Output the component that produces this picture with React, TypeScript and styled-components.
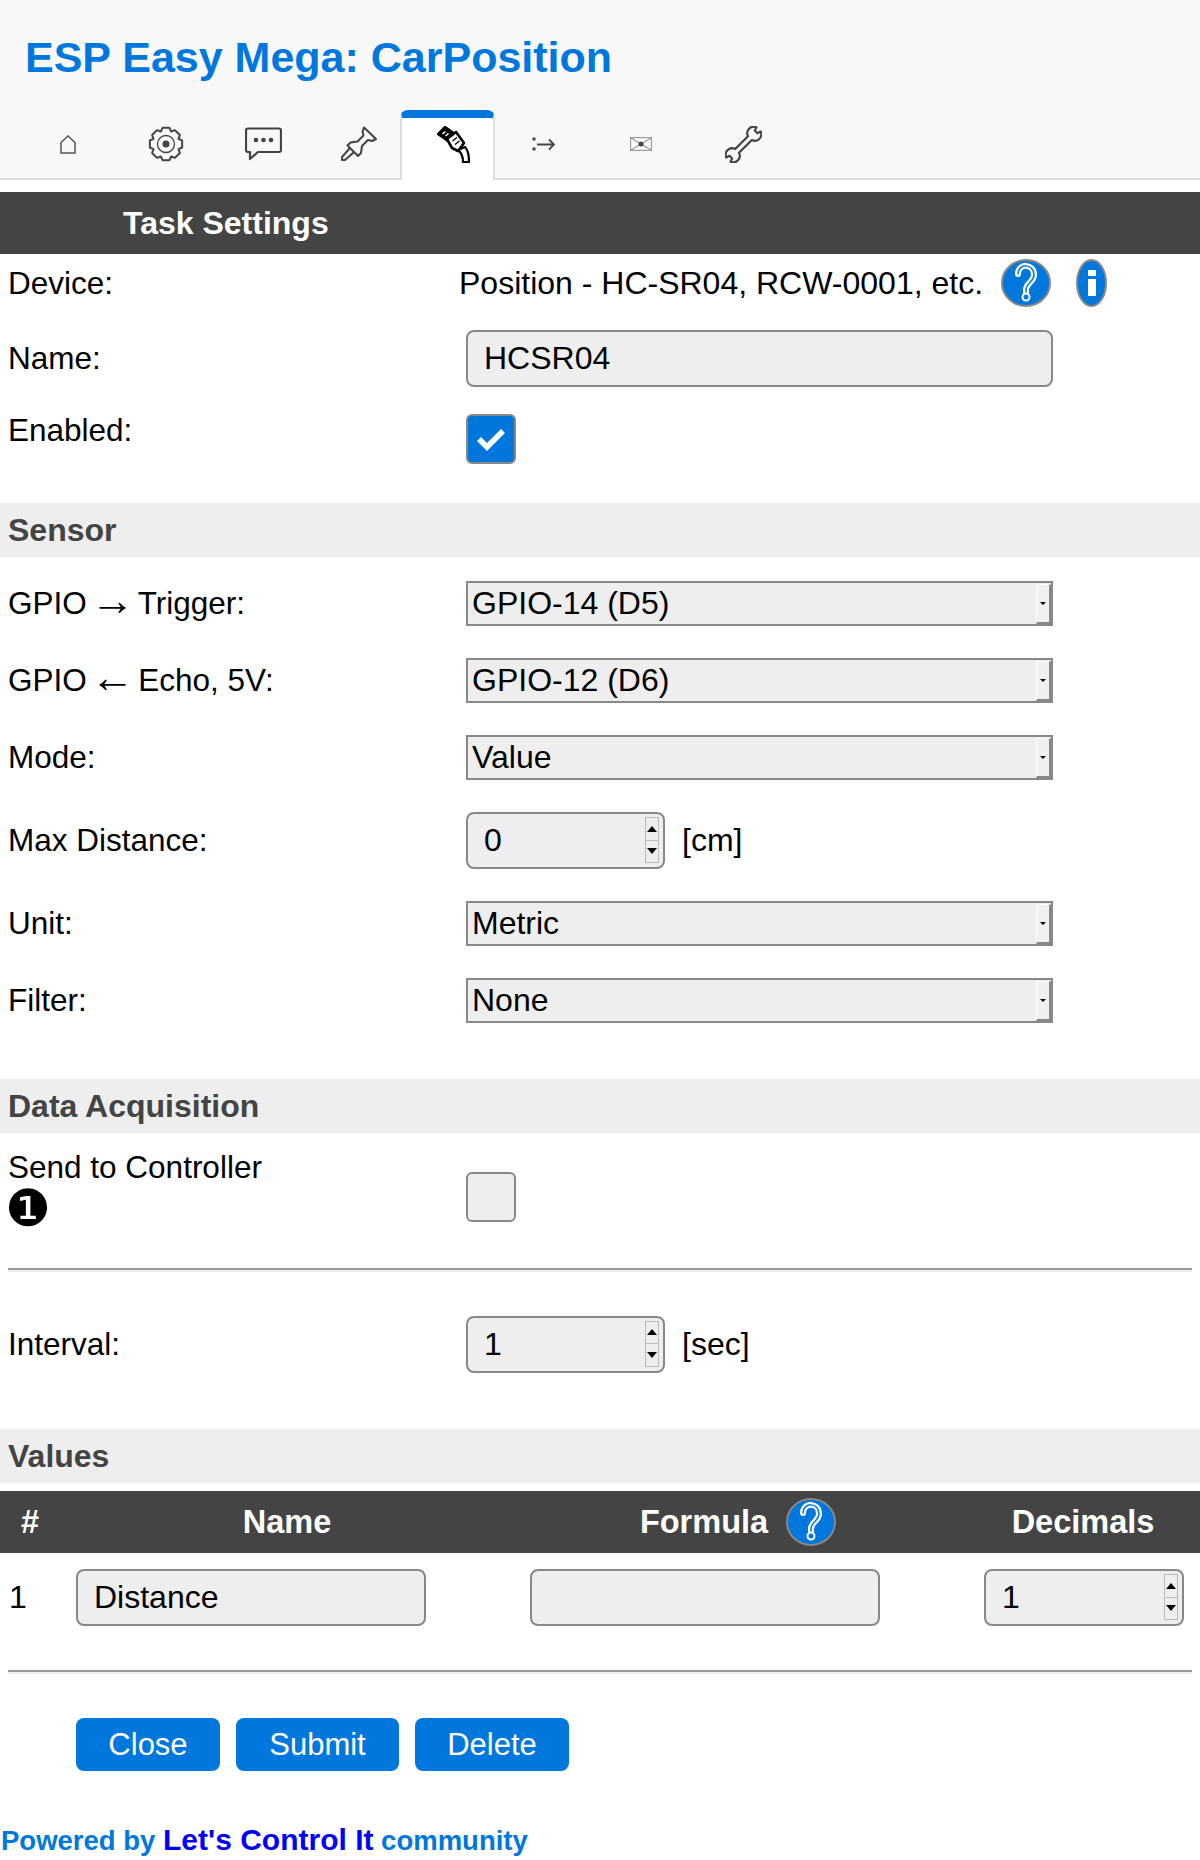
import React from "react";
import styled, { createGlobalStyle } from "styled-components";

const Global = createGlobalStyle`
  html, body { margin: 0; padding: 0; background: #fff; }
  body { width: 1200px; height: 1860px; overflow: hidden; font-family: "Liberation Sans", Arial, sans-serif; font-size: 32px; color: #000; }
  * { box-sizing: border-box; }
`;

const Head = styled.header`
  height: 180px;
  background: #f8f8f8;
  border-bottom: 2px solid #ddd;
  display: flex;
  flex-direction: column;
`;
const Title = styled.h1`
  margin: 0;
  flex: none;
  height: 110px;
  padding: 33px 0 0 25px;
  font-size: 43px;
  line-height: 48px;
  font-weight: 700;
  color: #07d;
`;
const Tabs = styled.nav`
  display: flex;
  flex: none;
  padding-left: 19px;
  height: 70px;
`;
const Tab = styled.a<{ $w: number; $active?: boolean }>`
  width: ${(p) => p.$w}px;
  flex: none;
  height: 70px;
  display: flex;
  align-items: center;
  justify-content: center;
  padding-bottom: 2px;
  ${(p) =>
    p.$active
      ? `background:#fff;border-top:8px solid #07d;border-left:2px solid #ddd;border-right:2px solid #ddd;border-radius:8px 8px 0 0;padding:0 0 10px 12px;`
      : ""}
`;
const TabsGap = styled.div`
  width: 8px;
  flex: none;
`;
const Bar = styled.div`
  margin-top: 12px;
  height: 62px;
  background: #444;
  color: #fff;
  font-weight: 700;
  font-size: 32px;
  line-height: 62px;
  padding-left: 123px;
`;
const Row = styled.div<{ $h: number }>`
  display: grid;
  grid-template-columns: 466px 1fr;
  align-items: center;
  height: ${(p) => p.$h}px;
`;
const Label = styled.div<{ $lift?: number }>`
  padding-left: 8px;
  font-size: 31.500px;
  line-height: 40px;
  margin-bottom: ${(p) => (p.$lift ?? 0) * 2}px;
`;
const ArrowChar = styled.span`
  font-size: 44px;
  line-height: 0;
  vertical-align: -1px;
  margin: 0 -5px;
`;
const Value = styled.div`
  display: flex;
  align-items: center;
`;
const DeviceText = styled.span`
  margin-left: -7px;
  white-space: nowrap;
`;
const HelpBtn = styled.a<{ $w: number; $ml: number }>`
  flex: none;
  width: ${(p) => p.$w}px;
  height: 48px;
  margin-left: ${(p) => p.$ml}px;
  display: block;
  line-height: 0;
`;
const Spacer = styled.div<{ $h: number }>`
  height: ${(p) => p.$h}px;
`;
const Section = styled.div`
  height: 54px;
  background: #eee;
  color: #444;
  font-weight: 700;
  font-size: 32px;
  line-height: 54px;
  padding-left: 8px;
`;
const TextInput = styled.input<{ $w: number }>`
  width: ${(p) => p.$w}px;
  height: 57px;
  background: #eee;
  border: 2px solid #888;
  border-radius: 8px;
  padding: 0 16px;
  font: 32px "Liberation Sans", Arial, sans-serif;
  color: #000;
  outline: none;
`;
const NumberBox = styled.div<{ $w: number }>`
  position: relative;
  width: ${(p) => p.$w}px;
  height: 57px;
  flex: none;
`;
const NumberInput = styled(TextInput)`
  width: 100%;
`;
const Spin = styled.div`
  position: absolute;
  right: 6px;
  top: 5px;
  bottom: 6px;
  width: 14px;
  border: 1px solid #bbb;
  display: flex;
  flex-direction: column;
  background: #eee;
`;
const SpinPart = styled.div<{ $down?: boolean }>`
  flex: 1;
  display: flex;
  align-items: center;
  justify-content: center;
  ${(p) => (p.$down ? "border-top:1px solid #bbb;" : "")}
  &::after {
    content: "";
    border-left: 5px solid transparent;
    border-right: 5px solid transparent;
    ${(p) => (p.$down ? "border-top:6px solid #000;" : "border-bottom:6px solid #000;")}
  }
`;
const Unit = styled.span`
  margin-left: 17px;
`;
const SelectBox = styled.div`
  position: relative;
  width: 587px;
  height: 45px;
`;
const Select = styled.select`
  appearance: none;
  display: block;
  width: 100%;
  height: 100%;
  background: #eee;
  border: 2px solid #888;
  border-radius: 0;
  padding: 0 0 2px 4px;
  font: 32px "Liberation Sans", Arial, sans-serif;
  color: #000;
  outline: none;
`;
const SelectArrow = styled.div`
  position: absolute;
  right: 2px;
  top: 3px;
  bottom: 2px;
  width: 15px;
  background: #f0f0f0;
  border-left: 1px solid #fff;
  border-top: 1px solid #fff;
  border-right: 2px solid #888;
  border-bottom: 2px solid #888;
  display: flex;
  align-items: center;
  justify-content: center;
  &::after {
    content: "";
    border-left: 3px solid transparent;
    border-right: 3px solid transparent;
    border-top: 3px solid #000;
  }
`;
const Check = styled.div<{ $on?: boolean }>`
  width: 50px;
  height: 50px;
  border-radius: 6px;
  border: 2px solid #888;
  background: ${(p) => (p.$on ? "#07d" : "#eee")};
  display: flex;
  align-items: center;
  justify-content: center;
`;
const Badge = styled.span`
  display: block;
  font-family: "DejaVu Serif", "DejaVu Sans", sans-serif;
  font-size: 51px;
  line-height: 40px;
  margin: 2px 0 -2px -3px;
`;
const Rule = styled.hr<{ $mt: number }>`
  margin: ${(p) => p.$mt}px 8px 0;
  height: 4px;
  border: 0;
  border-top: 2px solid #999;
  border-bottom: 2px solid #eee;
`;
const TableHead = styled.div`
  margin-top: 8px;
  height: 62px;
  background: #444;
  color: #fff;
  font-weight: 700;
  font-size: 32.500px;
  display: grid;
  grid-template-columns: 60px 454px 470px 216px;
  align-items: center;
  text-align: center;
`;
const HeadCell = styled.div<{ $pr?: number }>`
  display: flex;
  align-items: center;
  justify-content: center;
  padding-right: ${(p) => p.$pr ?? 0}px;
`;
const TableRow = styled.div`
  height: 89px;
  display: grid;
  grid-template-columns: 76px 454px 454px 216px;
  align-items: center;
`;
const RowNum = styled.div`
  padding-left: 9px;
`;
const Buttons = styled.div`
  margin-top: 44px;
  padding-left: 76px;
  display: flex;
  gap: 16px;
`;
const Btn = styled.a<{ $w: number }>`
  width: ${(p) => p.$w}px;
  height: 53px;
  background: #07d;
  color: #fff;
  border-radius: 8px;
  display: flex;
  align-items: center;
  justify-content: center;
  font-size: 31px;
`;
const Footer = styled.footer`
  margin-top: 49px;
  padding-left: 1px;
  font-size: 27.500px;
  line-height: 40px;
  font-weight: 700;
  color: #07d;
  white-space: nowrap;
`;
const FooterLink = styled.a`
  font-size: 30px;
  color: #00f;
`;

const gearPath = (() => {
  const pts: string[] = [];
  const n = 8;
  for (let i = 0; i < n; i++) {
    const a = (i / n) * Math.PI * 2;
    const step = (Math.PI * 2) / n;
    [
      [13.5, -0.5],
      [16.5, -0.27],
      [16.5, 0.27],
      [13.5, 0.5],
    ].forEach(([r, t]) => {
      const ang = a + t * step;
      pts.push(`${(18 + r * Math.cos(ang)).toFixed(2)} ${(18 + r * Math.sin(ang)).toFixed(2)}`);
    });
  }
  return "M" + pts.join("L") + "Z";
})();

const HomeIcon = () => (
  <svg width="16" height="19" viewBox="0 0 16 19" fill="none" stroke="#555" strokeWidth="1.500">
    <path d="M1 18V7.500L8 1l7 6.500V18Z" />
  </svg>
);
const GearIcon = () => (
  <svg width="36" height="36" viewBox="0 0 36 36" fill="none" stroke="#444" strokeWidth="2" strokeLinejoin="round">
    <path d={gearPath} />
    <circle cx="18" cy="18" r="8.500" strokeWidth="1.300" />
    <circle cx="18" cy="18" r="3.500" fill="#444" stroke="none" />
  </svg>
);
const ChatIcon = () => (
  <svg width="37" height="34" viewBox="0 0 37 34" fill="none" stroke="#444" strokeWidth="2.200" strokeLinejoin="round">
    <path d="M3 1.500H34a2 2 0 0 1 2 2V23a2 2 0 0 1-2 2H13l-8 7V25H3a2 2 0 0 1-2-2V3.500a2 2 0 0 1 2-2Z" />
    <circle cx="11" cy="13" r="2.300" fill="#444" stroke="none" />
    <circle cx="18.500" cy="13" r="2.300" fill="#444" stroke="none" />
    <circle cx="26" cy="13" r="2.300" fill="#444" stroke="none" />
  </svg>
);
const PinIcon = () => (
  <svg width="36" height="36" viewBox="0 0 36 36" fill="none" stroke="#444" strokeWidth="2" strokeLinejoin="round">
    <path d="M23 1.500 35 13l-4 2-4-1-6 6-1 7-3 3L6.500 19.500l3-3 7-1 6-6-1-4Z" />
    <path d="M9 22 1 31v3h3l9-8" />
  </svg>
);
const PlugIcon = () => (
  <svg width="33" height="37" viewBox="0 0 33 37" strokeLinejoin="round">
    <path d="M1 8 8 1l10 7-7 7Z" fill="#000" stroke="#000" strokeWidth="2.400" />
    <path d="M5.500 8 8.500 5.500M8.500 10 11.500 7.500" stroke="#fff" strokeWidth="1.600" fill="none" />
    <path d="M21 24C25 27 26 31 26 36h6C32 29 31 24 28 21Z" fill="#fff" stroke="#000" strokeWidth="2.200" />
    <path d="M10 13 19 6 27 17 21 25 15 22Z" fill="#fff" stroke="#000" strokeWidth="2.600" />
    <path d="M15.500 15l4.500-3.500M18 18.500l4.500-3.500" stroke="#000" strokeWidth="1.300" fill="none" />
  </svg>
);
const ArrowIcon = () => (
  <svg width="23" height="14" viewBox="0 0 23 14" fill="none" stroke="#444" strokeWidth="1.800">
    <circle cx="2" cy="2" r="1.700" fill="#444" stroke="none" />
    <circle cx="2" cy="12" r="1.700" fill="#444" stroke="none" />
    <path d="M5 7.500H21.500M17 2.500l5 5-5 5" />
  </svg>
);
const MailIcon = () => (
  <svg width="22" height="14" viewBox="0 0 22 14" fill="none" stroke="#999" strokeWidth="1.200">
    <rect x="0.600" y="0.600" width="20.800" height="12.800" fill="#fff" />
    <path d="M1 1l10 6 10-6M1 13l10-6 10 6" />
    <circle cx="11" cy="7" r="2.500" fill="#444" stroke="none" />
  </svg>
);
const WrenchIcon = () => (
  <svg width="37" height="37" viewBox="0 0 37 37" fill="none" stroke="#444" strokeWidth="2.200" strokeLinejoin="round">
    <path d="M23 10.200A6.500 6.500 0 0 1 31.500 1.300L29.800 4.500 32.500 7.200 35.700 5.500A6.500 6.500 0 0 1 26.800 14L14 26.800A6.500 6.500 0 0 1 5.500 35.700L7.200 32.500 4.500 29.800 1.300 31.500A6.500 6.500 0 0 1 10.200 23Z" />
  </svg>
);
const Tick = () => (
  <svg width="30" height="24" viewBox="0 0 30 24" fill="none" stroke="#fff" strokeWidth="5.500">
    <path d="M3 12l8 8L27 4" />
  </svg>
);
const HelpIcon = () => (
  <svg width="50" height="48" viewBox="0 0 50 48">
    <ellipse cx="25" cy="24" rx="24" ry="23" fill="#07d" stroke="#888" strokeWidth="2" />
    <g fill="none" strokeLinecap="round" strokeLinejoin="round">
      <path d="M17 15C17 4 33 4 33 16C33 23 26 23 25 30V35" stroke="#fff" strokeWidth="6" />
      <path d="M17 15C17 4 33 4 33 16C33 23 26 23 25 30V35" stroke="#07d" strokeWidth="1.500" />
    </g>
    <circle cx="25" cy="38" r="3.500" fill="#07d" stroke="#fff" strokeWidth="2" />
  </svg>
);
const InfoIcon = () => (
  <svg width="31" height="48" viewBox="0 0 31 48">
    <ellipse cx="15.500" cy="24" rx="14.500" ry="23" fill="#07d" stroke="#888" strokeWidth="2" />
    <rect x="12" y="11" width="8" height="6" fill="#fff" />
    <rect x="12" y="20" width="8" height="17" fill="#fff" />
  </svg>
);

const Dropdown = ({ value }: { value: string }) => (
  <SelectBox>
    <Select defaultValue={value}>
      <option>{value}</option>
    </Select>
    <SelectArrow />
  </SelectBox>
);
const Num = ({ w, value }: { w: number; value: string }) => (
  <NumberBox $w={w}>
    <NumberInput $w={w} defaultValue={value} />
    <Spin>
      <SpinPart />
      <SpinPart $down />
    </Spin>
  </NumberBox>
);

export default function App() {
  return (
    <>
      <Global />
      <Head>
        <Title>ESP Easy Mega: CarPosition</Title>
        <Tabs>
          <Tab $w={97}><HomeIcon /></Tab>
          <Tab $w={100}><GearIcon /></Tab>
          <Tab $w={94}><ChatIcon /></Tab>
          <TabsGap />
          <Tab $w={82}><PinIcon /></Tab>
          <Tab $w={95} $active><PlugIcon /></Tab>
          <Tab $w={97}><ArrowIcon /></Tab>
          <Tab $w={98}><MailIcon /></Tab>
          <Tab $w={106}><WrenchIcon /></Tab>
        </Tabs>
      </Head>
      <Bar>Task Settings</Bar>
      <Row $h={58}>
        <Label>Device:</Label>
        <Value>
          <DeviceText>Position - HC-SR04, RCW-0001, etc.</DeviceText>
          <HelpBtn $w={50} $ml={18}><HelpIcon /></HelpBtn>
          <HelpBtn $w={31} $ml={25}><InfoIcon /></HelpBtn>
        </Value>
      </Row>
      <Row $h={92}>
        <Label>Name:</Label>
        <Value><TextInput $w={587} defaultValue="HCSR04" /></Value>
      </Row>
      <Row $h={70}>
        <Label $lift={9}>Enabled:</Label>
        <Value><Check $on><Tick /></Check></Value>
      </Row>
      <Spacer $h={29} />
      <Section>Sensor</Section>
      <Spacer $h={8} />
      <Row $h={77}>
        <Label $lift={1}>GPIO <ArrowChar>→</ArrowChar> Trigger:</Label>
        <Value><Dropdown value="GPIO-14 (D5)" /></Value>
      </Row>
      <Row $h={77}>
        <Label $lift={1}>GPIO <ArrowChar>←</ArrowChar> Echo, 5V:</Label>
        <Value><Dropdown value="GPIO-12 (D6)" /></Value>
      </Row>
      <Row $h={77}>
        <Label $lift={1}>Mode:</Label>
        <Value><Dropdown value="Value" /></Value>
      </Row>
      <Row $h={89}>
        <Label $lift={1}>Max Distance:</Label>
        <Value><Num w={199} value="0" /><Unit>[cm]</Unit></Value>
      </Row>
      <Row $h={77}>
        <Label $lift={1}>Unit:</Label>
        <Value><Dropdown value="Metric" /></Value>
      </Row>
      <Row $h={77}>
        <Label $lift={1}>Filter:</Label>
        <Value><Dropdown value="None" /></Value>
      </Row>
      <Spacer $h={40} />
      <Section>Data Acquisition</Section>
      <Row $h={128}>
        <Label $lift={10}>
          Send to Controller
          <Badge>❶</Badge>
        </Label>
        <Value><Check /></Value>
      </Row>
      <Rule $mt={7} />
      <Row $h={144}>
        <Label>Interval:</Label>
        <Value><Num w={199} value="1" /><Unit>[sec]</Unit></Value>
      </Row>
      <Spacer $h={13} />
      <Section>Values</Section>
      <TableHead>
        <HeadCell>#</HeadCell>
        <HeadCell>Name</HeadCell>
        <HeadCell $pr={22}>Formula<HelpBtn $w={50} $ml={18}><HelpIcon /></HelpBtn></HeadCell>
        <HeadCell $pr={18}>Decimals</HeadCell>
      </TableHead>
      <TableRow>
        <RowNum>1</RowNum>
        <div><TextInput $w={350} defaultValue="Distance" /></div>
        <div><TextInput $w={350} defaultValue="" /></div>
        <Num w={200} value="1" />
      </TableRow>
      <Rule $mt={28} />
      <Buttons>
        <Btn $w={144}>Close</Btn>
        <Btn $w={163}>Submit</Btn>
        <Btn $w={154}>Delete</Btn>
      </Buttons>
      <Footer>
        Powered by <FooterLink>Let's Control It</FooterLink> community
      </Footer>
    </>
  );
}
